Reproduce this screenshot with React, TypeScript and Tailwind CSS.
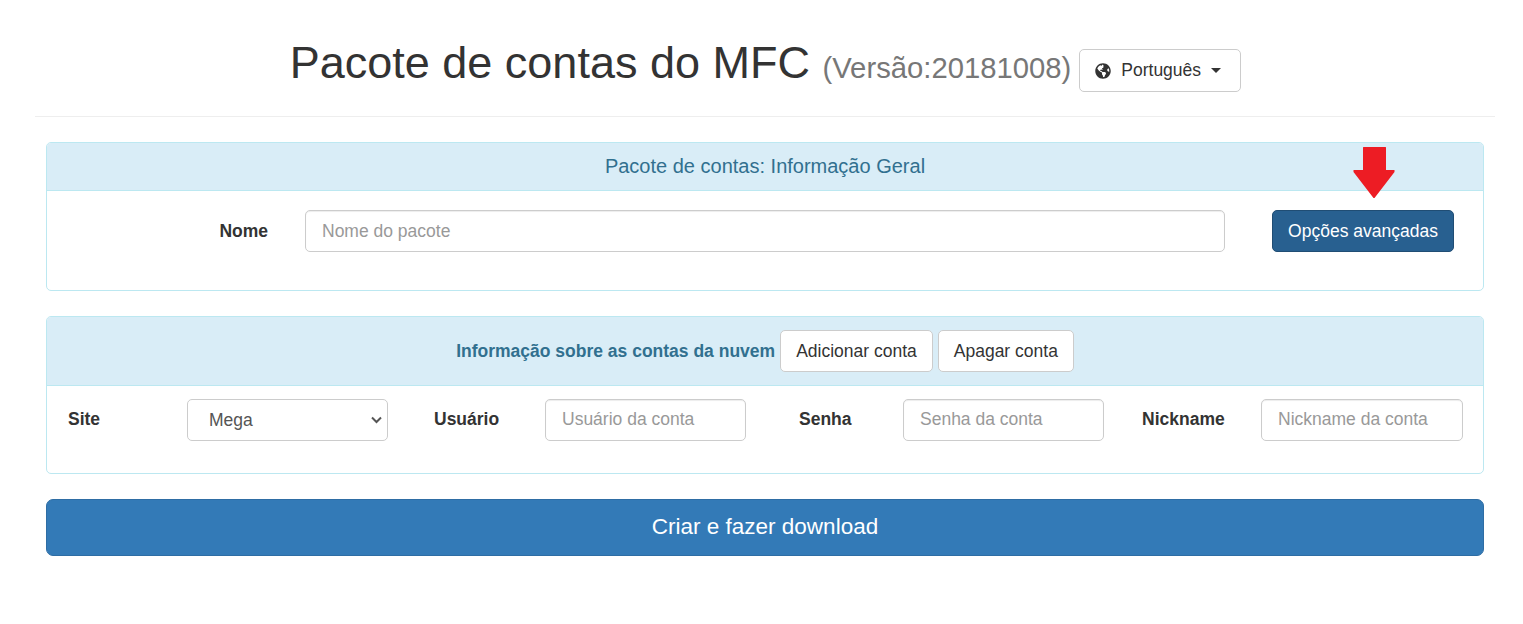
import { FaGlobeAmericas } from "react-icons/fa";

const labelClass = "text-[17.5px] leading-[25px] font-bold text-[#333]";
const inputClass =
  "h-[42px] rounded-[5px] border border-[#ccc] bg-white px-4 text-[17.5px] text-[#555] placeholder:text-[#999] shadow-[inset_0_1px_1px_rgba(0,0,0,0.075)] outline-none";
const plainButtonClass =
  "h-[42px] rounded-[5px] border border-[#ccc] bg-white px-[15px] text-[17.5px] text-[#333]";

function AccountField({ label, placeholder, labelOffset, labelWidth, inputWidth }: { label: string; placeholder: string; labelOffset: string; labelWidth: string; inputWidth: string }) {
  return (
    <div className="flex w-[358px] items-start">
      <label className={`${labelOffset} ${labelWidth} ${labelClass} mt-[8px] shrink-0`}>{label}</label>
      <input className={`${inputClass} ${inputWidth} shrink-0 pb-[2px]`} placeholder={placeholder} />
    </div>
  );
}

export default function App() {
  return (
    <div className="min-h-[624px] bg-white font-['Liberation_Sans',Arial,sans-serif] text-[#333]">
      <div className="pt-[37px] pr-[28px] pl-[35px]">
        {/* Header */}
        <div className="flex h-[80px] items-start justify-center border-b border-[#eee] pl-[1px]">
          <h1 className="pt-[1px] text-[45px] leading-[50px] font-normal text-[#333]">
            Pacote de contas do MFC{" "}
            <small className="text-[29.25px] leading-none text-[#777]">(Versão:20181008)</small>
          </h1>
          <button className="mt-[12px] ml-[8px] flex h-[43px] w-[162px] items-center rounded-[5px] border border-[#ccc] bg-white pl-[15px] text-[17.5px] text-[#333]">
            <FaGlobeAmericas size={16} className="mr-[10px] text-[#333]" />
            Português
            <span className="ml-[10px] h-0 w-0 border-x-[5px] border-t-[5px] border-x-transparent border-t-[#333]" />
          </button>
        </div>

        <div className="px-[11px] pt-[25px]">
          {/* General info */}
          <div className="relative h-[149px] rounded-[5px] border border-[#bce8f1] bg-white">
            <div className="flex h-[48px] items-center justify-center rounded-t-[4px] border-b border-[#bce8f1] bg-[#d9edf7] pb-[2px] text-[20px] text-[#31708f]">
              Pacote de contas: Informação Geral
            </div>
            <div className="flex items-start pt-[19px]">
              <label className={`${labelClass} mt-[9px] w-[258px] pr-[37px] text-right`}>Nome</label>
              <input className={`${inputClass} w-[920px]`} placeholder="Nome do pacote" />
              <button className="ml-[47px] h-[42px] w-[182px] rounded-[5px] border border-[#204d74] bg-[#286090] text-[17.5px] text-white">
                Opções avançadas
              </button>
            </div>
            {/* red arrow annotation */}
            <svg className="absolute top-[4px] left-[1306px]" width="42" height="52" viewBox="0 0 42 52">
              <path d="M10 0.5Q10 0 10.5 0H32.5Q33 0 33 0.5V23H41.5V25L21.5 51H20.5L0.5 25V23H10Z" fill="#ed1c24" />
            </svg>
          </div>

          {/* Cloud accounts */}
          <div className="mt-[25px] h-[158px] rounded-[5px] border border-[#bce8f1] bg-white">
            <div className="flex h-[69px] items-center justify-center gap-[5px] rounded-t-[4px] border-b border-[#bce8f1] bg-[#d9edf7]">
              <span className="text-[17.5px] font-bold text-[#31708f]">Informação sobre as contas da nuvem</span>
              <button className={plainButtonClass}>Adicionar conta</button>
              <button className={plainButtonClass}>Apagar conta</button>
            </div>
            <div className="flex items-start pt-[13px]">
              <div className="flex w-[341px] shrink-0 items-start">
                <label className={`ml-[21px] w-[119px] ${labelClass} mt-[8px]`}>Site</label>
                <div className="relative">
                  <select className="h-[42px] w-[201px] appearance-none rounded-[5px] border border-[#ccc] bg-white pr-5 pl-[21px] text-[17.5px] text-[#555]">
                    <option>Mega</option>
                  </select>
                  <svg className="pointer-events-none absolute top-[17px] right-[6px]" width="11" height="8" viewBox="0 0 11 8" fill="none">
                    <path d="M1 1.5L5.5 6L10 1.5" stroke="#555" strokeWidth="2" />
                  </svg>
                </div>
              </div>
              <AccountField label="Usuário" placeholder="Usuário da conta" labelOffset="ml-[46px]" labelWidth="w-[111px]" inputWidth="w-[201px]" />
              <AccountField label="Senha" placeholder="Senha da conta" labelOffset="ml-[53px]" labelWidth="w-[104px]" inputWidth="w-[201px]" />
              <AccountField label="Nickname" placeholder="Nickname da conta" labelOffset="ml-[38px]" labelWidth="w-[119px]" inputWidth="w-[202px]" />
            </div>
          </div>

          <button className="mt-[25px] h-[57px] w-full rounded-[7px] border border-[#2e6da4] bg-[#337ab7] pb-[2px] text-[22.5px] text-white">
            Criar e fazer download
          </button>
        </div>
      </div>
    </div>
  );
}
